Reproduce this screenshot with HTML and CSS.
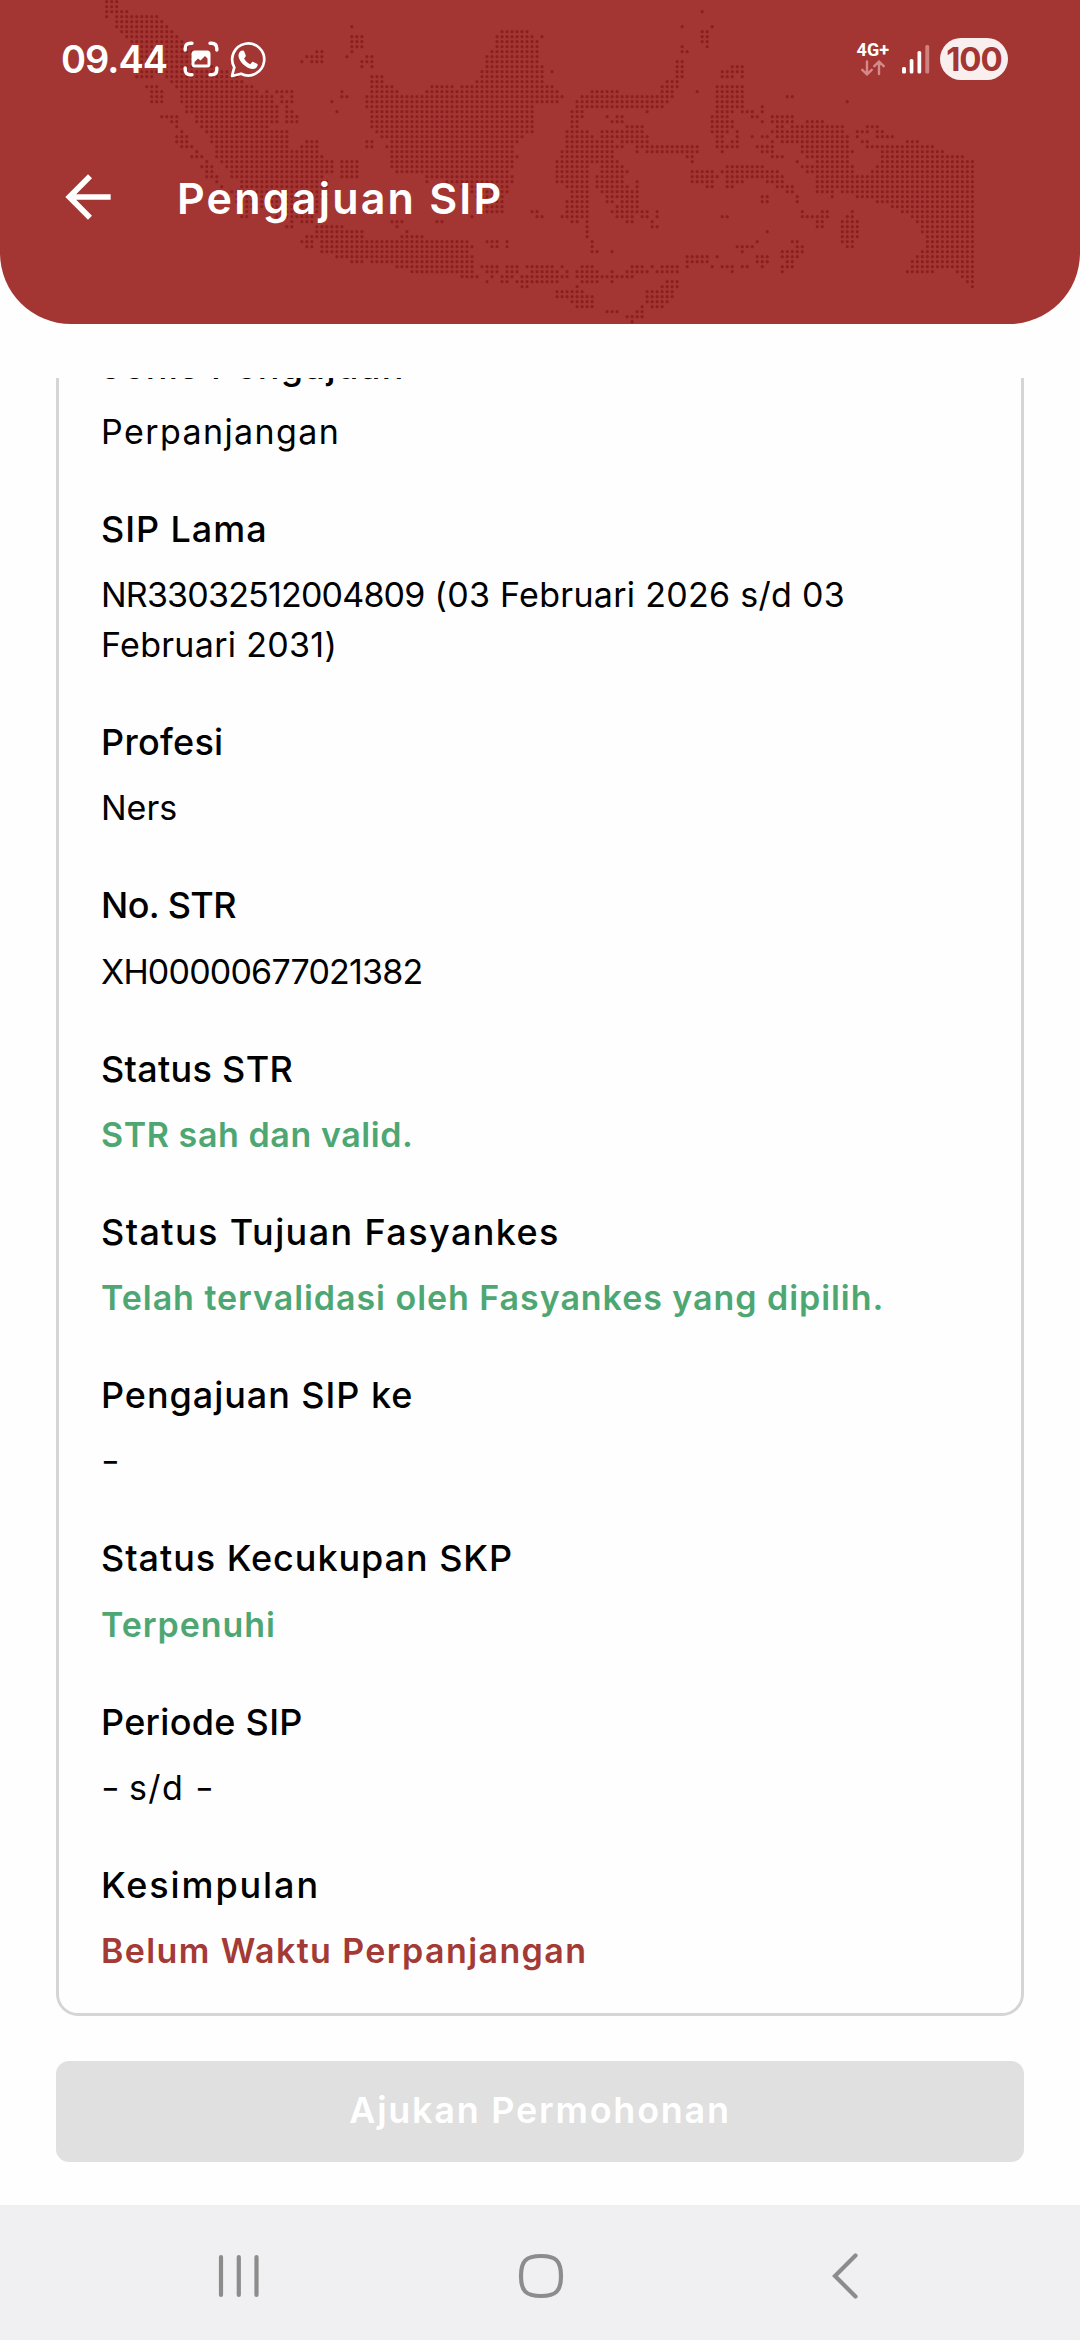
FILE: index.html
```html
<!DOCTYPE html>
<html lang="id">
<head>
<meta charset="utf-8">
<title>Pengajuan SIP</title>
<link rel="stylesheet" href="styles.css">
</head>
<body>
<header class="header">
  <svg class="map" viewBox="0 0 1080 324" aria-hidden="true"><path id="dots" transform="translate(106.7 1.7) scale(5.004 5)"/></svg>

  <div class="statusbar">
    <span class="time">09.44</span>
    <svg class="ic-shot" width="36" height="36" viewBox="0 0 36 36">
      <path fill="none" stroke="#fff" stroke-width="3.4" stroke-linecap="round" d="M2.2 9V7.5Q2.2 2.2 7.5 2.2H9M27 2.2h1.5q5.3 0 5.3 5.3V9M33.8 27v1.5q0 5.3-5.3 5.3H27M9 33.8H7.5q-5.3 0-5.3-5.3V27"/>
      <rect x="8.5" y="9.5" width="19" height="17" rx="3.5" fill="#fff"/>
      <path fill="#a33632" d="M11.5 23.5v-2.500l3.500-3.500 2.500 2 4.500-4.500 2.500 2.500v6z"/>
    </svg>
    <svg class="ic-wa" width="37" height="37" viewBox="0 0 37 37">
      <path fill="none" stroke="#fff" stroke-width="2.7" stroke-linejoin="round" d="M2 35l2.300-8.700A16 16 0 1 1 11 32.700z"/>
      <path fill="#fff" d="M12.500 9.600c.8 0 1.300.1 1.700 1l1.500 3.600c.3.700 0 1.300-1.600 3.200 1.300 2.500 3.300 4.500 6.300 5.800 1.700-2.100 2.100-2.700 3-2.300l3.600 1.800c.7.400.8.700.6 1.800-.6 2.600-3.100 3.700-5.300 3.500-6.800-.9-12.600-7-13.700-12.200-.4-2.600 1.200-6.200 3.900-6.200z"/>
    </svg>
    <div class="net">
      <span class="net-type">4G+</span>
      <svg width="24" height="16" viewBox="0 0 24 16"><path fill="none" stroke="#d48a88" stroke-width="2.4" stroke-linecap="round" stroke-linejoin="round" d="M6 1.500v13M1.300 9.800L6 14.500l4.700-4.700M18 14V1.500M13.300 6.200L18 1.500l4.700 4.700"/></svg>
    </div>
    <svg class="ic-signal" width="28" height="30" viewBox="0 0 28 30">
      <g fill="#fff"><rect y="23" width="4" height="6.5" rx="1.5"/><rect x="7.7" y="15" width="3.7" height="14.5" rx="1.5"/><rect x="15.5" y="7" width="3.7" height="22.5" rx="1.5"/></g>
      <rect x="23.3" y="1" width="3.9" height="28.5" rx="1.5" fill="#cf8280"/>
    </svg>
    <span class="battery">100</span>
  </div>

  <div class="titlebar">
    <svg width="68" height="68" viewBox="0 0 24 24"><path fill="#fff" d="M20 11H7.830l5.590-5.590L12 4l-8 8 8 8 1.410-1.410L7.830 13H20v-2z"/></svg>
    <h1>Pengajuan SIP</h1>
  </div>
</header>

<main class="scroll">
  <dl class="card">
    <dt class="wider">Jenis Pengajuan</dt>
    <dd class="wider">Perpanjangan</dd>
    <dt class="wide">SIP Lama</dt>
    <dd class="old-sip"><span class="num">NR33032512004809</span> (03 Februari 2026 s/d 03 Februari 2031)</dd>
    <dt>Profesi</dt>
    <dd>Ners</dd>
    <dt class="tight">No. STR</dt>
    <dd class="num">XH00000677021382</dd>
    <dt>Status STR</dt>
    <dd class="ok">STR sah dan valid.</dd>
    <dt class="wider">Status Tujuan Fasyankes</dt>
    <dd class="ok wide">Telah tervalidasi oleh Fasyankes yang dipilih.</dd>
    <dt class="wide">Pengajuan SIP ke</dt>
    <dd class="dash">-</dd>
    <dt class="wide">Status Kecukupan SKP</dt>
    <dd class="ok wide">Terpenuhi</dd>
    <dt>Periode SIP</dt>
    <dd class="wider"><span class="dash">-</span> s/d <span class="dash">-</span></dd>
    <dt class="widest">Kesimpulan</dt>
    <dd class="bad wider">Belum Waktu Perpanjangan</dd>
  </dl>
</main>

<button class="submit" disabled>Ajukan Permohonan</button>

<nav class="navbar">
  <svg width="42" height="46" viewBox="0 0 42 46"><path d="M3 4v38M20.8 4v38M38.5 4v38"/></svg>
  <svg class="home" width="46" height="46" viewBox="0 0 46 46"><path d="M23 3C38 3 43 8 43 23S38 43 23 43 3 38 3 23 8 3 23 3z"/></svg>
  <svg class="back" width="28" height="46" viewBox="0 0 28 46"><path d="M24.5 2.500L4 23l20.500 20.500"/></svg>
</nav>
<script src="map.js"></script>
</body>
</html>
```
FILE: map.js
```js
// dotted archipelago in the header, one string per row, "from-to" columns
var rows = [
  '0-2', '0-2', '0-4 119', '0 2-10', '2-11',
  '2-12 49 115 121', '3-13 79-84 119-120', '4-14 49-51 78-85 87 119-120', '5-15 49-51 78-86 119-120', '6-16 49-51 78-86 115 120',
  '6-17 42-43 49 77-86 115-116', '6-18 40-43 48 52-53 76-86', '6-20 39 41-43 51-53 76-86 114-115', '6-21 51 53 76-87 114-115 125-127', '6-24 75-87 89 114-115 123-127',
  '6-9 12-26 53-55 75-87 114-115 123-125 127', '13-27 53-55 74-87 112-114', '8-10 14-29 53-57 65-69 71-89 111-114 122-127', '9-11 15-30 32 34-37 47 53-58 64-90 97-102 111-113 118 122-127', '9-11 15-33 35 37 47-48 52-91 95-113 122-127 136-137',
  '9-11 15-33 35-37 45 52-90 94-112 122-127 148', '16-34 36 52-85 94-111 122-127 131', '16-34 36-37 46 53-85 93-95 108 122-125 127-129 131', '11-14 18-34 36-38 53-85 93-95 100 102-103 121-124 129-130 133-137', '13-14 18-34 36-38 53-85 93-94 101-103 121-125 131 133-137 140-143',
  '14 19-32 53-85 93-94 104-107 121-125 134-135 137-147 152-154', '15 20-36 54-85 92-96 99-107 121-124 126 133-147 150-152 154-155', '14-16 21-36 55-83 92-97 99-108 122-123 126 129 131-132 134-148 150 154-157', '14-16 21-36 40-42 52-53 57-82 92-101 103-108 122-123 125-126 133 135-148 151-152 160-162', '15-17 22-36 39-42 52-53 56-81 92-103 106-118 122-126 130-133 139-148 152-165',
  '18 22-42 57-81 91-101 106 108-118 123 131-133 139-149 155-167', '17-19 22-43 57-82 91-101 116-117 133-135 140-148 155-171', '20 23-45 47-50 57-81 90-102 117 138 142-148 155-173', '19-21 24-45 47-50 57-81 90-96 99-103 124-131 139-149 154-173', '20-21 25-45 47-50 58-80 90-96 99-104 117-121 123-134 140-149 153-173',
  '20-22 25-43 47-50 64-81 90-96 98-103 117-122 124-135 142-173', '22 27-44 64 68-81 90-96 98-103 106 117-121 124-127 132-135 142-173', '23 27-44 71-80 92-96 98-104 106 120-121 124-125 134-137 142-173', '25-44 73-80 93-96 99-106 136-137 142-145 147-173', '26-44 74-79 93-96 100-106 131-132 138 145 150-173',
  '26-42 75-79 92-96 100-101 103-106 131-132 138 154-173', '28-42 75-79 92-96 102-106 157-173', '28 34-42 75-79 85-86 92-96 101-108 110 139 143-144 149 159-173', '27-28 34-41 73 86-87 91-96 102-105 107-108 110 123-124 139-144 148-149 161-173', '37 39-41 57-59 66-67 93-94 96 104-105 109 142-143 147-150 162-173',
  '36-37 42-47 58 96 109-110 142-143 147-150 163-173', '42-51 60 96 132 147-150 163-173', '40-51 59-63 96 147-150 164-173', '39-41 43-72 76-78 80 97 130 137-138 147-149 164-173', '40-41 43-73 77-78 80 97 126-129 138-139 148-149 164-173',
  '43-72 97-98 101 127 135-139 163-173', '46-73 116-120 122 130-132 135-138 162-173', '49-51 53-73 116-120 130-132 136-137 161-173', '58-73 75-78 80-82 84-89 91 95-97 105-107 109 111-114 116 121 123-125 127-128 131 135-137 161-173', '61-73 76-78 80-82 85-90 92 94-98 101 104-108 110-114 125 135 160-165 170-173',
  '71-74 77 79-81 83-92 94-105 171-173', '76 79-80 82-90 95-98 101 112-114 172-173', '83-84 94 111-114 173', '90-95 108-113', '90-97 108-113',
  '93-97 108-112', '94-97 107 109-111', '100-102 106-107', '104-107', '105'
];

var d = '';
rows.forEach(function (row, y) {
  row.split(' ').forEach(function (run) {
    var p = run.split('-');
    d += 'M' + p[0] + ' ' + y + 'h' + ((p[1] || p[0]) - p[0] + 0.1);
  });
});
document.getElementById('dots').setAttribute('d', d);
```
FILE: styles.css
```css
* {
  box-sizing: border-box;
}

body {
  margin: 0;
  width: 1080px;
  height: 2340px;
  display: flex;
  flex-direction: column;
  background: #fefefe;
  color: #000;
  font-family: Inter, "Noto Sans", sans-serif;
  overflow: hidden;
}

svg {
  display: block;
  flex: none;
}

.header {
  position: relative;
  height: 324px;
  flex: none;
  background: #a33632;
  border-radius: 0 0 71px 71px;
  overflow: hidden;
  color: #fff;
}

.map {
  position: absolute;
  top: 0;
  left: 0;
  width: 1080px;
  height: 324px;
}

.map path {
  fill: none;
  stroke: #8c1f1e;
  stroke-width: .64;
  stroke-linecap: round;
  stroke-dasharray: 0 1;
}

/* status bar */
.statusbar {
  position: relative;
  display: flex;
  align-items: center;
  height: 118px;
  padding: 0 72px 0 61px;
}

.time {
  width: 122px;
  font-size: 38px;
  font-weight: 600;
  letter-spacing: -1px;
}

.ic-wa {
  margin-left: 11px;
}

.net {
  display: flex;
  flex-direction: column;
  align-items: center;
  gap: 3px;
  margin-left: auto;
}

.net-type {
  font: bold 18px/14px Roboto, sans-serif;
}

.ic-signal {
  margin-left: 13px;
}

.battery {
  width: 68px;
  height: 42px;
  margin-left: 10px;
  border-radius: 21px;
  background: #f9efef;
  color: #a33632;
  font-size: 33px;
  font-weight: 700;
  line-height: 42px;
  text-align: center;
  letter-spacing: -1px;
}

.titlebar {
  position: relative;
  display: flex;
  align-items: center;
  padding: 44px 54px 0;
}

.titlebar h1 {
  margin: 2px 0 0 55px;
  font-size: 43px;
  font-weight: 600;
  line-height: 68px;
  letter-spacing: 2.2px;
}

/* detail card, scrolled below the top edge */
.scroll {
  height: 1638px;
  margin-top: 54px;
  padding: 0 56px;
  flex: none;
  overflow: hidden;
}

.card {
  margin: -80px 0 0;
  padding: 38.5px 42px 37px;
  border: 3px solid #d5d5d5;
  border-radius: 22px;
}

.card dt {
  font-size: 36px;
  font-weight: 500;
  line-height: 52px;
  letter-spacing: .3px;
}

.card dd {
  margin: 15.25px 0 46px;
  font-size: 34px;
  line-height: 50px;
}

.card dd:last-child {
  margin-bottom: 0;
}

.card .ok,
.card .bad {
  font-weight: 600;
}

.card .ok {
  color: #4ea773;
  letter-spacing: .58px;
}

.card .bad {
  color: #a33a35;
}

/* tracking */
.card .tight {
  letter-spacing: -.6px;
}

.card .num {
  letter-spacing: -.8px;
}

.card .old-sip {
  letter-spacing: .3px;
}

.card .wide {
  letter-spacing: .95px;
}

.card .wider {
  letter-spacing: 1.4px;
}

.card .widest {
  letter-spacing: 1.9px;
}

.card .dash {
  display: inline-block;
  transform: scaleX(1.2);
  transform-origin: left;
}

.submit {
  height: 101px;
  margin: 45px 56px 43px;
  padding: 0 0 3px;
  flex: none;
  border: 0;
  border-radius: 13px;
  background: #e0e0e0;
  color: #fff;
  font: 600 36px Inter, "Noto Sans", sans-serif;
  letter-spacing: 1.75px;
}

/* system navigation */
.navbar {
  display: flex;
  flex: 1;
  align-items: center;
  padding: 7px 0 0 218px;
  background: #f0f0f2;
}

.navbar .home {
  margin-left: 258px;
}

.navbar .back {
  margin-left: 267px;
}

.navbar path {
  fill: none;
  stroke: #8c8c8c;
  stroke-width: 4.2;
  stroke-linecap: round;
}
```
